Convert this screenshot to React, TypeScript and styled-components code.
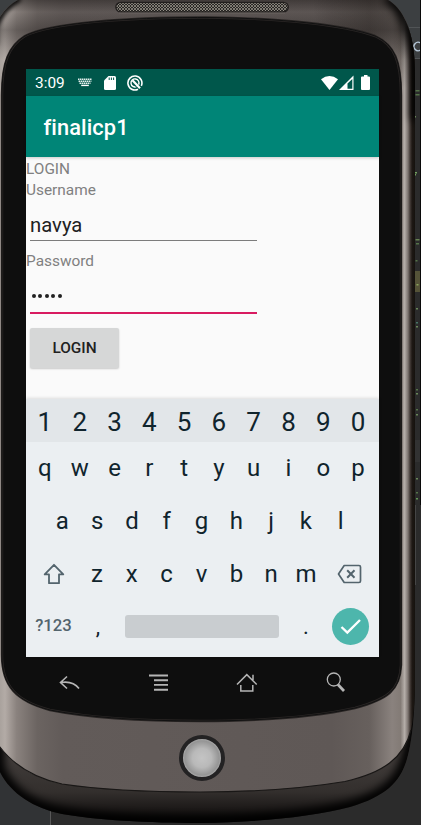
import React from "react";
import styled, { createGlobalStyle } from "styled-components";

const GlobalStyle = createGlobalStyle`
  * { box-sizing: border-box; }
  body { margin: 0; background: #2b2b2b; font-family: Roboto, "Liberation Sans", sans-serif; overflow: hidden; }
`;

const Desktop = styled.main`
  position: relative;
  width: 421px;
  height: 825px;
  overflow: hidden;
`;

const Backdrop = styled.svg`
  position: absolute;
  inset: 0;
`;

const Device = styled.div`
  position: relative;
  display: flex;
  flex-direction: column;
  padding: 69px 42px 0 26px;
`;

const Screen = styled.section`
  display: flex;
  flex-direction: column;
  height: 588px;
  background: #fafafa;
`;

const StatusBar = styled.div`
  display: flex;
  align-items: center;
  flex: none;
  height: 27px;
  padding: 0 8px 0 9px;
  background: #00574b;
  color: #fff;
`;

const Time = styled.time`
  font-size: 15.4px;
  line-height: 27px;
  width: 43px;
  padding-top: 1px;
`;

const StatusIcons = styled.div<{ $end?: boolean }>`
  display: flex;
  align-items: center;
  margin-left: ${(p) => (p.$end ? "auto" : "0")};
  svg { display: block; }
`;

const NoticeIcons = styled(StatusIcons)`
  gap: 11.5px;
`;

const AppBar = styled.header`
  display: flex;
  align-items: center;
  flex: none;
  height: 61px;
  padding: 1px 0 0 17.5px;
  background: #008577;
  box-shadow: 0 1px 3px rgba(0, 0, 0, 0.2);
`;

const Title = styled.h1`
  margin: 0;
  color: #fff;
  font-size: 21.8px;
  font-weight: 500;
  letter-spacing: 0.1px;
`;

const Form = styled.form`
  display: flex;
  flex-direction: column;
  flex: none;
  height: 242px;
  padding-top: 1.5px;
`;

const Label = styled.label`
  color: #808080;
  font-size: 15.4px;
  line-height: 21.5px;
  height: 21.5px;
`;

const Field = styled.div<{ $active?: boolean }>`
  display: flex;
  align-items: center;
  width: 227px;
  height: ${(p) => (p.$active ? "41.5px" : "39.5px")};
  margin: ${(p) => (p.$active ? "0 0 13.5px 4px" : "0 0 10px 4px")};
  padding-top: ${(p) => (p.$active ? "7px" : "8px")};
  border-bottom: ${(p) => (p.$active ? "2.5px solid #d81b60" : "1px solid #7c7c7c")};
  color: #212121;
  font-size: 20.3px;
`;

const Dots = styled.span`
  display: flex;
  gap: 2.6px;
  padding-left: 1.5px;
`;

const Dot = styled.i`
  width: 4px;
  height: 4px;
  border-radius: 50%;
  background: #212121;
`;

const LoginButton = styled.button`
  flex: none;
  width: 89px;
  height: 40px;
  margin-left: 4px;
  border: 0;
  border-radius: 2px;
  background: #d6d7d7;
  box-shadow: 0 1px 2px rgba(0, 0, 0, 0.2);
  color: #212121;
  font: 500 15.4px Roboto, sans-serif;
  padding: 1px 0 0;
`;

const Keyboard = styled.div`
  display: flex;
  flex-direction: column;
  flex: 1;
  background: #ebeff2;
  box-shadow: 0 -1px 3px rgba(0, 0, 0, 0.12);
`;

const KeyRow = styled.div<{ $inset?: number; $digits?: boolean }>`
  display: flex;
  align-items: center;
  flex: none;
  height: ${(p) => (p.$digits ? "43px" : "52.8px")};
  padding: ${(p) => (p.$digits ? "2px" : "0")} ${(p) => (p.$inset ?? 2) + 1.5}px 0 ${(p) => (p.$inset ?? 2) - 0.5}px;
  background: ${(p) => (p.$digits ? "#e2e6e9" : "transparent")};
  font-size: ${(p) => (p.$digits ? "26px" : "24px")};
  line-height: 1;
`;

const Key = styled.span`
  flex: 1;
  text-align: center;
  color: #10242d;
`;

const WideKey = styled.span<{ $w: number }>`
  display: flex;
  flex: none;
  justify-content: center;
  width: ${(p) => p.$w}px;
  color: #53646d;
  font-size: 16.7px;
  font-weight: 500;
`;

const Punctuation = styled.span<{ $shift: number }>`
  flex: none;
  width: 44px;
  padding-left: ${(p) => Math.max(p.$shift, 0)}px;
  padding-right: ${(p) => Math.max(-p.$shift, 0)}px;
  text-align: center;
  color: #10242d;
  font-size: 22px;
`;

const SpaceBar = styled.span`
  flex: none;
  width: 154px;
  height: 23px;
  border-radius: 3px;
  background: #c9cdd0;
`;

const Enter = styled.span`
  display: flex;
  flex: none;
  width: 37px;
  height: 37px;
  margin-left: 9px;
  border-radius: 50%;
  background: #4db6ac;
`;

const BottomRow = styled(KeyRow)`
  padding: 0;
`;

const NavRow = styled.nav`
  display: flex;
  height: 53px;
  padding: 13px 0 0 31px;
  gap: 64.5px;
  svg { display: block; flex: none; }
`;

const Trackball = styled.div`
  width: 46px;
  height: 46px;
  margin: 25px 0 0 153px;
  border: 4.5px solid #232223;
  border-radius: 50%;
  background: radial-gradient(circle closest-side, #c4c4c4 0%, #b9b9b9 50%, #959595 90%, #a8a8a8 100%);
`;

const BODY =
  "M-6 60 V28 C0 14 8 5 18 0 H388 C402 8 410 26 413 46 Q415 58 415 80 V680 C415 715 412 742 407 759 C401 780 388 796 350 807 C310 817 260 822 200 823 C150 823 95 820 62 814 C32 808 8 792 -2 768 Z";
const FACE =
  "M-6 60 V28 C0 14 8 5 18 0 H388 C402 8 410 26 413 46 Q415 58 415 80 V690 Q414 715 411 730 C404 758 383 773 345 781.5 C300 789 250 792 200 792 C145 792 95 789 62 784 C30 777 10 762 -3 743 Z";
const SEAM =
  "M-3 743 C10 762 30 777 62 784 C95 789 145 792 200 792 C250 792 300 789 345 781.5 C383 773 404 758 411 730";
const GLASS =
  "M2 95 C2 62 9 46 25 36 C50 23 125 17.5 205 17.5 C280 18 345 25 375 36 C395 45 401 62 401 95 V665 C400 690 388 699 355 708 C310 718 250 721 200 721 C150 721 90 718 50 710 C16 701 2 686 2 655 Z";

/* Short coloured ticks: characters of an editor window showing past the phone. */
const CODE_TICKS: [number, number, number, string][] = [
  [415.5, 90, 4, "#557348"], [415.5, 94, 4, "#557348"], [415, 116, 1, "#6a8759"],
  [415, 172, 2, "#73a05f"], [415, 174, 1, "#73a05f"], [415.5, 239, 4, "#668152"], [416, 243, 3, "#557348"],
  [415.5, 260, 2, "#557348"], [416.5, 284, 2, "#8ca45c"], [416, 308, 2, "#6a8759"],
  [416, 322, 2, "#477466"], [416, 326, 2, "#6a8759"], [416, 389, 2, "#557348"],
  [416, 393, 2, "#6a8759"], [416, 409, 2, "#557348"], [416, 414, 2, "#6a8759"],
  [416, 478, 2, "#6a8759"], [416, 492, 2, "#557348"], [416, 498, 2, "#629755"],
];

function PhoneArt() {
  return (
    <Backdrop width="421" height="825" viewBox="0 0 421 825" aria-hidden="true">
      <defs>
        <linearGradient id="metal" gradientUnits="userSpaceOnUse" x1="0" y1="0" x2="415" y2="0">
          <stop offset="0" stopColor="#a9a29d" />
          <stop offset="0.012" stopColor="#b3aba6" />
          <stop offset="0.04" stopColor="#8a827e" />
          <stop offset="0.09" stopColor="#6b6461" />
          <stop offset="0.15" stopColor="#625b59" />
          <stop offset="0.8" stopColor="#5f5856" />
          <stop offset="0.89" stopColor="#67605d" />
          <stop offset="0.945" stopColor="#8a827e" />
          <stop offset="0.965" stopColor="#837b76" />
          <stop offset="0.975" stopColor="#b5aea9" />
          <stop offset="0.983" stopColor="#7d7571" />
          <stop offset="0.988" stopColor="#453d39" />
          <stop offset="0.993" stopColor="#1e1814" />
          <stop offset="1" stopColor="#15120e" />
        </linearGradient>
        <linearGradient id="topShade" x1="0" y1="0" x2="0" y2="1">
          <stop offset="0" stopColor="#1b1716" stopOpacity="0.45" />
          <stop offset="0.2" stopColor="#1b1716" stopOpacity="0.05" />
          <stop offset="0.5" stopColor="#1b1716" stopOpacity="0.35" />
          <stop offset="1" stopColor="#1b1716" stopOpacity="0" />
        </linearGradient>
        <radialGradient id="topRightShade" gradientUnits="userSpaceOnUse" cx="398" cy="4" r="85">
          <stop offset="0" stopColor="#16110f" stopOpacity="0.55" />
          <stop offset="1" stopColor="#16110f" stopOpacity="0" />
        </radialGradient>
        <linearGradient id="chin" gradientUnits="userSpaceOnUse" x1="0" y1="745" x2="0" y2="823">
          <stop offset="0" stopColor="#45403e" />
          <stop offset="0.6" stopColor="#332f2d" />
          <stop offset="0.82" stopColor="#1c1918" />
          <stop offset="1" stopColor="#030303" />
        </linearGradient>
        <pattern id="mesh" width="3" height="3" patternUnits="userSpaceOnUse">
          <rect width="3" height="3" fill="#292725" />
          <path d="M0 0 L3 3 M3 0 L0 3" stroke="#a09b91" strokeWidth="0.7" />
        </pattern>
        <clipPath id="bodyClip"><path d={BODY} /></clipPath>
        <clipPath id="faceClip"><path d={FACE} /></clipPath>
        <filter id="soft" x="-30%" y="-30%" width="160%" height="160%"><feGaussianBlur stdDeviation="4" /></filter>
        <filter id="fine" x="-30%" y="-30%" width="160%" height="160%"><feGaussianBlur stdDeviation="2" /></filter>
      </defs>
      <rect width="421" height="825" fill="#2b2b2b" />
      <rect width="421" height="59" fill="#3c3f41" />
      <path d="M400 27.5H421M400 58.5H421" stroke="#515456" />
      <path d="M420.5 43 A4.2 4.2 0 1 0 420.5 50" fill="none" stroke="#b7c8d8" strokeWidth="1.4" />
      <rect y="740" width="50" height="85" fill="#313335" />
      <path d="M50.5 740V825" stroke="#595959" />
      <rect x="415" y="271" width="6" height="21" fill="#555338" />
      <rect x="415" y="440" width="6" height="22" fill="#323232" />
      {CODE_TICKS.map(([x, y, w, color]) => (
        <rect key={y} x={x} y={y} width={w} height="1.5" fill={color} />
      ))}
      <path d="M420.5 0V505" stroke="#090909" />
      <path d="M415.5 505V585" stroke="#454545" />

      <path d={BODY} fill="url(#chin)" />
      <g clipPath="url(#bodyClip)">
        <path d={BODY} fill="none" stroke="#000" strokeWidth="13" filter="url(#soft)" />
      </g>
      <path d={FACE} fill="url(#metal)" />
      <g clipPath="url(#faceClip)">
        <rect x="0" y="0" width="415" height="60" fill="url(#topShade)" />
        <rect x="300" y="0" width="115" height="100" fill="url(#topRightShade)" />
        <path d="M-5 45 V28 C0 14 8 5 20 -2" fill="none" stroke="#050505" strokeWidth="5" filter="url(#fine)" />
        <path d="M387 -3 C402 6 412 30 416 62 V120" fill="none" stroke="#050505" strokeWidth="10" filter="url(#soft)" />
      </g>
      <path d={SEAM} fill="none" stroke="#191716" strokeWidth="1.2" />
      <path d={GLASS} fill="#0e0e0e" stroke="#2a2625" strokeWidth="2.4" />
      <path d={GLASS} fill="none" stroke="#111" strokeWidth="1" />
      <rect x="115.8" y="2.3" width="172.5" height="9.6" rx="4.8" fill="url(#mesh)" stroke="#211e1d" strokeWidth="1.3" />
      <path d="M119 13H285" stroke="#77706c" strokeWidth="0.6" />
    </Backdrop>
  );
}

const NotificationIcons = () => (
  <NoticeIcons>
    <svg width="14" height="9" viewBox="0 0 14 9">
      <path d="M0 1.2H14M0.6 3.2H13.4M1.5 5.2H12.5" stroke="#e4efed" strokeWidth="1.4" strokeDasharray="1.5 .5" />
      <path d="M3.2 7.4H10.8" stroke="#fff" strokeWidth="1.4" />
    </svg>
    <svg width="12" height="14" viewBox="0 0 12 14">
      <path d="M4.5 0H10.5Q12 0 12 1.5V12.5Q12 14 10.5 14H1.5Q0 14 0 12.5V4.5Z" fill="#fff" />
      <path d="M5.2 1.5V4M7.4 1.5V4M9.6 1.5V4" stroke="#00574b" strokeWidth="1" />
    </svg>
    <svg width="16" height="16" viewBox="0 0 16 16">
      <path d="M11 14.3A7 7 0 1 1 14.3 10.9" fill="none" stroke="#fff" strokeWidth="1.6" />
      <path d="M9.5 11.6A4 4 0 1 1 11.6 9.6" fill="none" stroke="#fff" strokeWidth="1.4" />
      <path d="M5.5 5.3L13 13.2" stroke="#fff" strokeWidth="2.2" />
      <path d="M6.5 9.5L10.5 13" stroke="#00574b" strokeWidth="0.8" />
    </svg>
  </NoticeIcons>
);

const SystemIcons = () => (
  <StatusIcons $end>
    <svg width="50" height="16" viewBox="0 0 50 16">
      <path d="M0 4.2Q8.5 -2.2 17 4.2L8.5 15Z" fill="#fff" />
      <path d="M18 15L32.5 0.5V15Z" fill="#fff" />
      <path d="M26.5 8.5L31.3 4V13.8H26.5Z" fill="#00574b" />
      <path d="M43 0H46.5V1.5H48Q49 1.5 49 2.5V14Q49 15 48 15H41Q40 15 40 14V2.5Q40 1.5 41 1.5H43Z" fill="#fff" />
    </svg>
  </StatusIcons>
);

const ShiftIcon = () => (
  <svg width="22" height="22" viewBox="0 0 22 22" fill="none" stroke="#53646d" strokeWidth="1.8" strokeLinejoin="round">
    <path d="M11 1.8L20.3 11.4H16V20.2H6V11.4H1.7Z" />
  </svg>
);

const BackspaceIcon = () => (
  <svg width="25" height="20" viewBox="0 0 25 20" fill="none" stroke="#53646d" strokeWidth="1.7" strokeLinejoin="round">
    <path d="M7.2 1.5H22Q23.5 1.5 23.5 3V17Q23.5 18.5 22 18.5H7.2L1.5 10Z" />
    <path d="M10.2 6.2L17.5 13.8M17.5 6.2L10.2 13.8" strokeWidth="2" />
  </svg>
);

const NavigationIcons = () => (
  <NavRow>
    <svg width="25" height="24" viewBox="57 670 25 24" fill="none" stroke="#b5b5b5" strokeWidth="1.6">
      <path d="M67 676.5L60.5 682.5L67 688.5M60.8 682.5Q73 680.5 79 688.5" />
    </svg>
    <svg width="24" height="24" viewBox="146.5 670 24 24" stroke="#b5b5b5" strokeWidth="1.9">
      <path d="M148.5 675.5H167.5M153.5 680.3H167.5M153.5 684.9H167.5M153.5 689.7H167.5" />
    </svg>
    <svg width="24" height="24" viewBox="235 670 24 24" fill="none" stroke="#b5b5b5" strokeWidth="1.5">
      <path d="M237 684.5L246.8 674.6L256.7 684.5M240.8 685V691H252.8V685M253 674.8V680" />
    </svg>
    <svg width="24" height="24" viewBox="323.5 670 24 24" fill="none" stroke="#b5b5b5" strokeWidth="1.3">
      <circle cx="333.3" cy="679.5" r="6.5" />
      <path d="M337.4 684.5L343.5 691" strokeWidth="2.8" />
    </svg>
  </NavRow>
);

const keys = (chars: string) => chars.split("").map((c) => <Key key={c}>{c}</Key>);

export default function App() {
  return (
    <Desktop>
      <GlobalStyle />
      <PhoneArt />
      <Device>
        <Screen>
          <StatusBar>
            <Time>3:09</Time>
            <NotificationIcons />
            <SystemIcons />
          </StatusBar>
          <AppBar><Title>finalicp1</Title></AppBar>
          <Form>
            <Label>LOGIN</Label>
            <Label>Username</Label>
            <Field>navya</Field>
            <Label>Password</Label>
            <Field $active>
              <Dots><Dot /><Dot /><Dot /><Dot /><Dot /></Dots>
            </Field>
            <LoginButton type="button">LOGIN</LoginButton>
          </Form>
          <Keyboard>
            <KeyRow $digits>{keys("1234567890")}</KeyRow>
            <KeyRow>{keys("qwertyuiop")}</KeyRow>
            <KeyRow $inset={19.5}>{keys("asdfghjkl")}</KeyRow>
            <KeyRow>
              <WideKey $w={52}><ShiftIcon /></WideKey>
              {keys("zxcvbnm")}
              <WideKey $w={52}><BackspaceIcon /></WideKey>
            </KeyRow>
            <BottomRow>
              <WideKey $w={55}>?123</WideKey>
              <Punctuation $shift={-10}>,</Punctuation>
              <SpaceBar />
              <Punctuation $shift={10}>.</Punctuation>
              <Enter>
                <svg width="37" height="37" viewBox="0 0 37 37" fill="none" stroke="#fff" strokeWidth="2.4">
                  <path d="M9.5 19L15.3 24.5L28 12" />
                </svg>
              </Enter>
            </BottomRow>
          </Keyboard>
        </Screen>
        <NavigationIcons />
        <Trackball />
      </Device>
    </Desktop>
  );
}
